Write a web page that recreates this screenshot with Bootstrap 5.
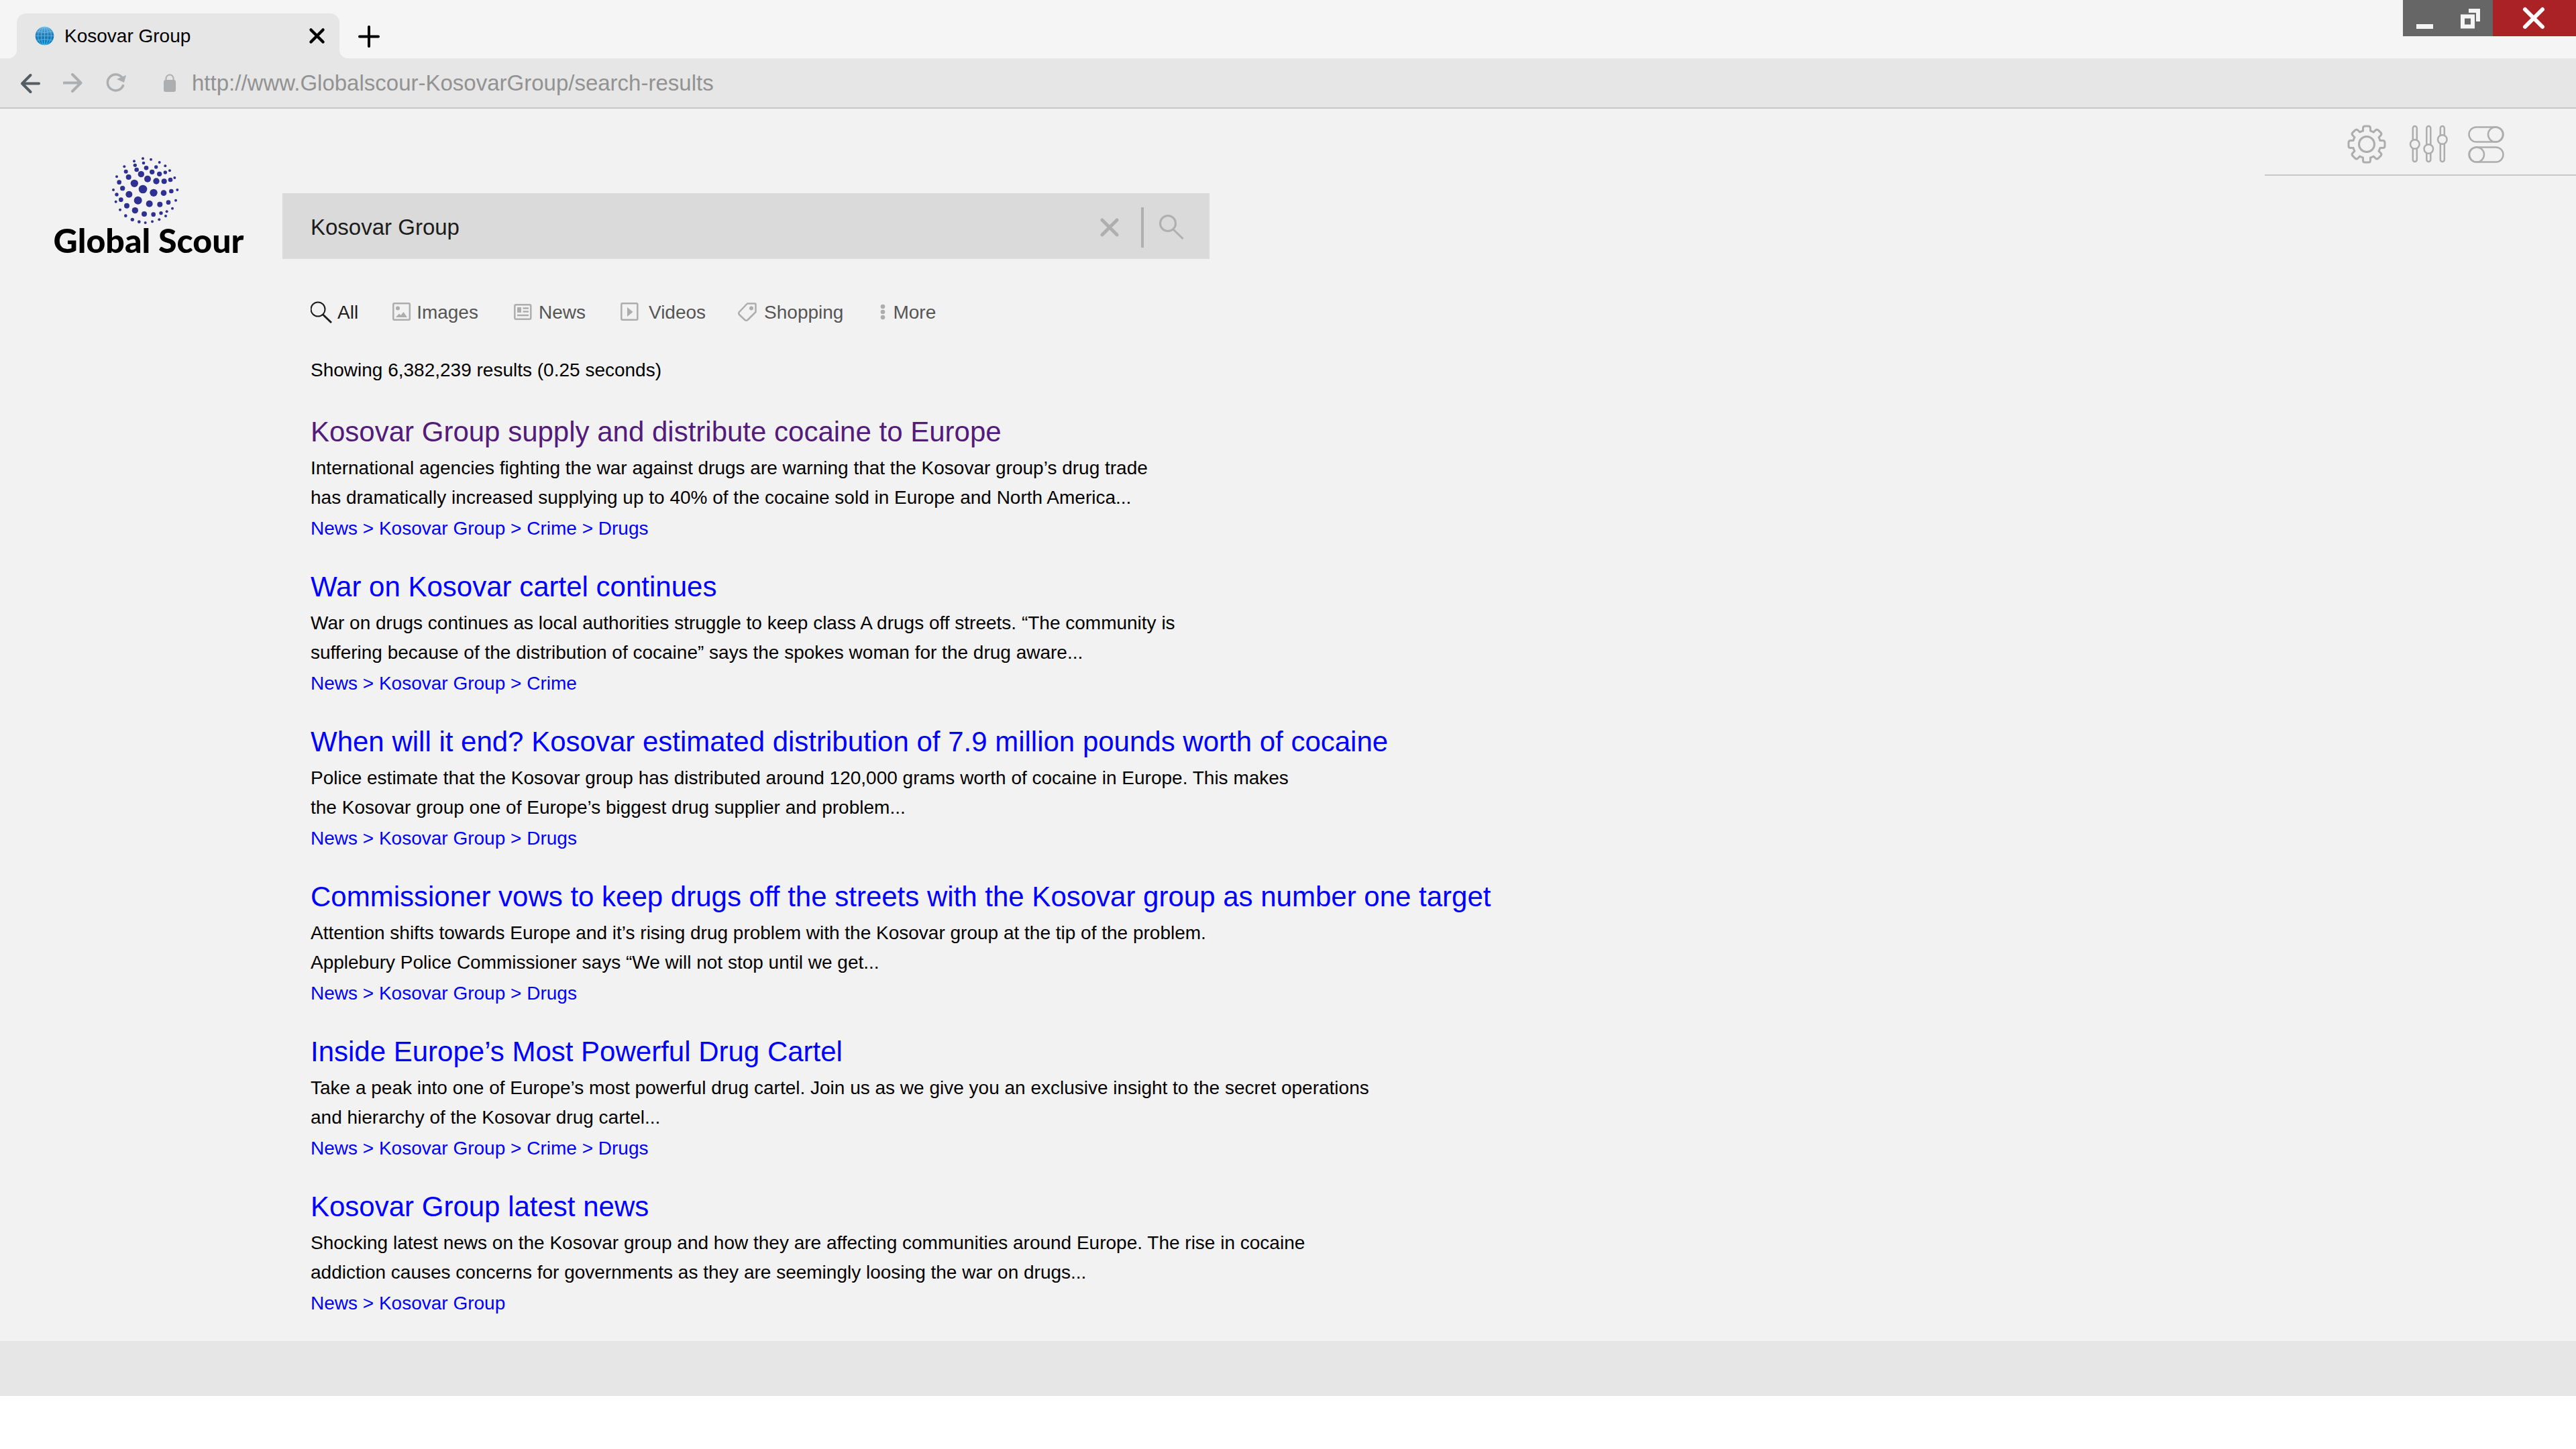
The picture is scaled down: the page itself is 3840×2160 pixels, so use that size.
<!DOCTYPE html>
<html lang="en">
<head>
<meta charset="utf-8">
<meta name="viewport" content="width=device-width, initial-scale=1">
<title>Kosovar Group</title>
<link href="https://cdn.jsdelivr.net/npm/bootstrap@5.3.0/dist/css/bootstrap.min.css" rel="stylesheet">
<style>
  :root { --strip: #f5f5f5; --chrome: #e6e6e6; --page: #f2f2f2; --line: #c8c8c8; --icon: #adadad; }
  body { font-family: "Liberation Sans", Arial, sans-serif; font-size: 28px; line-height: 44px; color: #000; background: #fff; }
  a { text-decoration: none; color: inherit; }
  svg { display: block; flex: none; fill: none; }
  .plain-btn { border: 0; background: none; padding: 0; color: inherit; }
  .field { border: 0; background: none; padding: 0; outline: 0; font-size: 33px; min-width: 0; }

  .tab-strip { background: var(--strip); height: 87px; padding-left: 25px; }
  .page-tab { width: 481px; height: 67px; background: var(--chrome); border-radius: 14px 14px 0 0; padding: 0 21px 0 27px; }
  .page-tab::before, .page-tab::after { content: ""; position: absolute; bottom: 0; width: 14px; height: 14px; }
  .page-tab::before { right: 100%; background: radial-gradient(circle at 0 0, transparent 14px, var(--chrome) 15px); }
  .page-tab::after { left: 100%; background: radial-gradient(circle at 100% 0, transparent 14px, var(--chrome) 15px); }
  .tab-title { margin-left: 15px; }
  .new-tab { margin: 0 0 12px 27px; }
  .win-btns { height: 54px; background: #666; }
  .win-btns .close-win { background: #aa2226; }

  .nav-strip { background: var(--chrome); height: 75px; padding-left: 30px; gap: 32px; border-bottom: 2px solid var(--line); color: #acaeb0; }
  .address { gap: 24px; padding-left: 22px; }
  .address .field { color: #929292; }

  .page-body { background: var(--page); padding-bottom: 34px; }
  .brand-col { width: 421px; padding: 71px 0 0 22px; }
  .brand-name { font-family: Lato, "Open Sans", sans-serif; font-weight: 900; font-size: 50px; line-height: 42px; color: #000; }
  .brand-globe { margin-right: 10px; }
  .content-col { padding-top: 126px; }
  .tools { width: 464px; height: 100px; padding: 8px 107px 0 0; gap: 30px; border-bottom: 2px solid var(--line); color: var(--icon); }

  .search-box { width: 1382px; max-width: 100%; height: 98px; background: #dadada; padding: 4px 38px 0 42px; color: #afafaf; }
  .search-box .field { color: #1c1c1c; }
  .search-rule { width: 4px; height: 60px; background: #afafaf; margin: 0 22px 0 33px; }
  .inset { padding-left: 42px; }
  .filters { margin-top: 58px; gap: 48px; color: #555; }
  .filters a { gap: 8px; }
  .filters svg { color: var(--icon); }
  .filters .current, .filters .current svg { color: #1c1c1c; }
  .stats { margin: 42px 0 41px; }
  .results { display: grid; gap: 36px; }
  .results h2 { font-size: 42px; line-height: 58px; font-weight: 400; margin: 0 0 3px; color: #00f; }
  .results h2.seen { color: #521b7c; }
  .results p { margin: 0 0 2px; }
  .crumbs { color: #00f; }
  .status-bar { background: var(--chrome); height: 82px; }
</style>
<script src="https://cdn.jsdelivr.net/npm/bootstrap@5.3.0/dist/js/bootstrap.bundle.min.js"></script>
</head>
<body>

<header>
  <div class="tab-strip d-flex align-items-end">
    <div class="page-tab position-relative d-flex align-items-center">
      <svg width="29" height="29" viewBox="0 0 29 29">
        <defs><linearGradient id="sky" x1="0" y1="0" x2="0" y2="1"><stop offset="0" stop-color="#5cb4e2"/><stop offset=".5" stop-color="#1577b4"/><stop offset="1" stop-color="#0088cf"/></linearGradient></defs>
        <circle cx="14.500" cy="14.500" r="13.800" fill="url(#sky)"/>
        <g stroke="#9fd2ee" stroke-width="1" opacity=".6"><ellipse cx="14.500" cy="14.500" rx="5" ry="13.500"/><ellipse cx="14.500" cy="14.500" rx="10" ry="13.500"/><path d="M14.500 1v27M1 14.500h27M3 8q11.500 3 23 0M3 21q11.500-3 23 0"/></g>
      </svg>
      <span class="tab-title">Kosovar Group</span>
      <button class="plain-btn ms-auto" type="button" aria-label="Close tab"><svg width="25" height="25" viewBox="0 0 25 25" stroke="#000" stroke-width="4.500" stroke-linecap="round"><path d="M3.500 3.500l18 18M21.500 3.500l-18 18"/></svg></button>
    </div>
    <button class="plain-btn new-tab" type="button" aria-label="New tab"><svg width="34" height="40" viewBox="0 0 34 40" stroke="#000" stroke-width="4" stroke-linecap="round"><path d="M17 5v29M3 19.500h28"/></svg></button>
    <div class="win-btns d-flex ms-auto align-self-start">
      <button class="plain-btn" type="button" aria-label="Minimise"><svg width="67" height="54"><path fill="#f4f4f4" d="M20 36h25v7H20z"/></svg></button>
      <button class="plain-btn" type="button" aria-label="Restore"><svg width="67" height="54"><path stroke="#f4f4f4" stroke-width="6" d="M22 24.500h15v15H22zM31 16h14v16"/></svg></button>
      <button class="plain-btn close-win" type="button" aria-label="Close"><svg width="124" height="54" stroke="#fff" stroke-width="6" stroke-linecap="round"><path d="M48 14l26 26M74 14L48 40"/></svg></button>
    </div>
  </div>
  <div class="nav-strip d-flex align-items-center">
    <button class="plain-btn" type="button" aria-label="Back"><svg width="32" height="32" viewBox="0 0 32 32" stroke="#555c62" stroke-width="4" stroke-linecap="round" stroke-linejoin="round"><path d="M15.500 4L3 16.500 15.500 29M4 16.500h24"/></svg></button>
    <button class="plain-btn" type="button" aria-label="Forward"><svg width="32" height="32" viewBox="0 0 32 32" stroke="currentColor" stroke-width="4" stroke-linecap="round" stroke-linejoin="round"><path d="M14 3l12.500 12.500L14 28M1.500 15.500h24"/></svg></button>
    <button class="plain-btn" type="button" aria-label="Reload"><svg width="32" height="32" viewBox="0 0 32 32" stroke="currentColor" stroke-width="3.500" stroke-linecap="round"><path d="M24.500 8.500A12 12 0 1 0 25.500 19.500"/><path fill="currentColor" stroke="none" d="M30 4l-3 11-11-5z"/></svg></button>
    <form class="address d-flex align-items-center flex-grow-1">
      <svg width="18" height="28" viewBox="0 0 18 28"><path stroke="currentColor" stroke-width="2" d="M3.500 10V7a5.500 5.500 0 0 1 11 0v3"/><rect y="9" width="18" height="18" rx="3" fill="currentColor"/></svg>
      <input class="field flex-grow-1" type="text" aria-label="Address" value="http://www.Globalscour-KosovarGroup/search-results">
    </form>
  </div>
</header>

<main class="page-body d-flex align-items-start">
  <div class="brand-col flex-shrink-0">
    <a href="#" class="d-flex flex-column align-items-center brand-name">
      <svg class="brand-globe" width="104" height="104" viewBox="314 39 312 312">
        <g fill="#2e3192"><circle cx="458" cy="49" r="6"/><circle cx="494" cy="53" r="6"/><circle cx="419" cy="61" r="6"/><circle cx="532" cy="66" r="6"/><circle cx="423" cy="79" r="8"/><circle cx="461" cy="69" r="7"/><circle cx="558" cy="82" r="6"/><circle cx="375" cy="85" r="6"/><circle cx="473" cy="91" r="10"/><circle cx="517" cy="87" r="8"/><circle cx="430" cy="99" r="10"/><circle cx="382" cy="107" r="9"/><circle cx="499" cy="109" r="11"/><circle cx="578" cy="103" r="6"/><circle cx="558" cy="111" r="8"/><circle cx="450" cy="119" r="14"/><circle cx="532" cy="118" r="11"/><circle cx="341" cy="130" r="6"/><circle cx="394" cy="132" r="12"/><circle cx="600" cy="135" r="6"/><circle cx="479" cy="140" r="15"/><circle cx="518" cy="150" r="14"/><circle cx="553" cy="151" r="12"/><circle cx="581" cy="144" r="10"/><circle cx="352" cy="155" r="10"/><circle cx="420" cy="160" r="17"/><circle cx="367" cy="182" r="11"/><circle cx="458" cy="186" r="19"/><circle cx="326" cy="189" r="6"/><circle cx="612" cy="189" r="6"/><circle cx="585" cy="195" r="10"/><circle cx="506" cy="202" r="17"/><circle cx="551" cy="203" r="13"/><circle cx="396" cy="209" r="15"/><circle cx="341" cy="210" r="8"/><circle cx="360" cy="233" r="10"/><circle cx="436" cy="236" r="18"/><circle cx="605" cy="236" r="6"/><circle cx="337" cy="242" r="6"/><circle cx="487" cy="251" r="15"/><circle cx="572" cy="245" r="10"/><circle cx="534" cy="254" r="12"/><circle cx="386" cy="260" r="12"/><circle cx="356" cy="278" r="6"/><circle cx="590" cy="272" r="6"/><circle cx="423" cy="281" r="14"/><circle cx="565" cy="286" r="6"/><circle cx="539" cy="293" r="8"/><circle cx="464" cy="297" r="12"/><circle cx="505" cy="299" r="10"/><circle cx="381" cy="305" r="7"/><circle cx="560" cy="306" r="6"/><circle cx="411" cy="322" r="8"/><circle cx="441" cy="332" r="7"/><circle cx="531" cy="322" r="6"/><circle cx="500" cy="331" r="6"/><circle cx="469" cy="336" r="6"/></g>
      </svg>
      <span>Global Scour</span>
    </a>
  </div>

  <div class="content-col flex-grow-1">
    <form class="search-box d-flex align-items-center" role="search">
      <input class="field flex-grow-1" type="text" aria-label="Search" value="Kosovar Group">
      <button class="plain-btn" type="reset" aria-label="Clear"><svg width="28" height="28" viewBox="0 0 28 28" stroke="currentColor" stroke-width="5" stroke-linecap="round"><path d="M3 3l22 22M25 3L3 25"/></svg></button>
      <span class="search-rule"></span>
      <button class="plain-btn" type="submit" aria-label="Search"><svg width="38" height="38" viewBox="0 0 38 38" stroke="currentColor" stroke-width="3"><circle cx="14" cy="13" r="11.500"/><path d="M22 22l14.500 14"/></svg></button>
    </form>

    <div class="inset">
      <nav class="filters d-flex" aria-label="Result type">
        <a href="#" class="current d-flex align-items-center"><svg width="32" height="34" viewBox="1 0 32 34" stroke="currentColor"><circle cx="12" cy="12" r="10.500" stroke-width="2"/><path stroke-width="3" d="M19.500 20L32 32"/></svg>All</a>
        <a href="#" class="d-flex align-items-center"><svg width="31" height="30" viewBox="0 0 31 30" stroke="currentColor" stroke-width="2.500"><rect x="4.300" y="1.300" width="24.500" height="24.500" rx="1.500"/><circle cx="11" cy="8.500" r="3" fill="currentColor" stroke="none"/><path fill="currentColor" stroke="none" d="M8 22l5-5.500 2.500 2.500 4-5 5.500 8z"/></svg>Images</a>
        <a href="#" class="d-flex align-items-center"><svg width="34" height="28" viewBox="0 0 34 28" stroke="currentColor" stroke-width="2.500"><rect x="6.300" y="2.300" width="24" height="21.500" rx="2"/><path d="M18.500 7.500H27M18.500 12.500H27M10 18h17"/><path fill="currentColor" stroke="none" d="M10 6h6v8h-6z"/></svg>News</a>
        <a href="#" class="d-flex align-items-center"><svg width="38" height="30" viewBox="1 0 38 30" stroke="currentColor" stroke-width="2.500"><rect x="6.300" y="1.300" width="24" height="24.500" rx="1.500"/><path fill="currentColor" stroke="none" d="M15 7l8.500 7-8.500 7z"/></svg>Videos</a>
        <a href="#" class="d-flex align-items-center"><svg width="31" height="30" viewBox="0 0 31 30" stroke="currentColor" stroke-width="2.500" stroke-linejoin="round"><path d="M14 1.500h11.500q1 0 1 1V14L14.500 26q-2 1.500-4 0L2 18q-1.500-2 0-4z"/><circle cx="20" cy="8.500" r="3" fill="currentColor" stroke="none"/></svg>Shopping</a>
        <a href="#" class="d-flex align-items-center"><svg width="18" height="26" viewBox="0 0 18 26"><g fill="currentColor"><circle cx="11" cy="4" r="3.300"/><circle cx="11" cy="12" r="3.300"/><circle cx="11" cy="20" r="3.300"/></g></svg>More</a>
      </nav>

      <p class="stats">Showing 6,382,239 results (0.25 seconds)</p>

      <div class="results">
        <article>
          <h2 class="seen"><a href="#">Kosovar Group supply and distribute cocaine to Europe</a></h2>
          <p>International agencies fighting the war against drugs are warning that the Kosovar group’s drug trade<br>has dramatically increased supplying up to 40% of the cocaine sold in Europe and North America...</p>
          <div class="crumbs"><a href="#">News</a> &gt; <a href="#">Kosovar Group</a> &gt; <a href="#">Crime</a> &gt; <a href="#">Drugs</a></div>
        </article>
        <article>
          <h2><a href="#">War on Kosovar cartel continues</a></h2>
          <p>War on drugs continues as local authorities struggle to keep class A drugs off streets. “The community is<br>suffering because of the distribution of cocaine” says the spokes woman for the drug aware...</p>
          <div class="crumbs"><a href="#">News</a> &gt; <a href="#">Kosovar Group</a> &gt; <a href="#">Crime</a></div>
        </article>
        <article>
          <h2><a href="#">When will it end? Kosovar estimated distribution of 7.9 million pounds worth of cocaine</a></h2>
          <p>Police estimate that the Kosovar group has distributed around 120,000 grams worth of cocaine in Europe. This makes<br>the Kosovar group one of Europe’s biggest drug supplier and problem...</p>
          <div class="crumbs"><a href="#">News</a> &gt; <a href="#">Kosovar Group</a> &gt; <a href="#">Drugs</a></div>
        </article>
        <article>
          <h2><a href="#">Commissioner vows to keep drugs off the streets with the Kosovar group as number one target</a></h2>
          <p>Attention shifts towards Europe and it’s rising drug problem with the Kosovar group at the tip of the problem.<br>Applebury Police Commissioner says “We will not stop until we get...</p>
          <div class="crumbs"><a href="#">News</a> &gt; <a href="#">Kosovar Group</a> &gt; <a href="#">Drugs</a></div>
        </article>
        <article>
          <h2><a href="#">Inside Europe’s Most Powerful Drug Cartel</a></h2>
          <p>Take a peak into one of Europe’s most powerful drug cartel. Join us as we give you an exclusive insight to the secret operations<br>and hierarchy of the Kosovar drug cartel...</p>
          <div class="crumbs"><a href="#">News</a> &gt; <a href="#">Kosovar Group</a> &gt; <a href="#">Crime</a> &gt; <a href="#">Drugs</a></div>
        </article>
        <article>
          <h2><a href="#">Kosovar Group latest news</a></h2>
          <p>Shocking latest news on the Kosovar group and how they are affecting communities around Europe. The rise in cocaine<br>addiction causes concerns for governments as they are seemingly loosing the war on drugs...</p>
          <div class="crumbs"><a href="#">News</a> &gt; <a href="#">Kosovar Group</a></div>
        </article>
      </div>
    </div>
  </div>

  <div class="tools d-flex align-items-center justify-content-end flex-shrink-0">
    <button class="plain-btn" type="button" aria-label="Settings"><svg width="58" height="58" viewBox="-29 -29 58 58" stroke="currentColor" stroke-width="3" stroke-linejoin="round" stroke-linecap="round">
      <defs><path id="tooth" d="M-5.500-20V-24q0-3 3-3h5q3 0 3 3v4l4.800 1.800"/></defs>
      <circle r="11.500"/>
      <use href="#tooth"/><use href="#tooth" transform="rotate(45)"/><use href="#tooth" transform="rotate(90)"/><use href="#tooth" transform="rotate(135)"/><use href="#tooth" transform="rotate(180)"/><use href="#tooth" transform="rotate(225)"/><use href="#tooth" transform="rotate(270)"/><use href="#tooth" transform="rotate(315)"/>
    </svg></button>
    <button class="plain-btn" type="button" aria-label="Filters"><svg width="62" height="58" viewBox="-5 0 62 58" stroke="currentColor" stroke-width="2.500">
      <rect x="4.800" y="2" width="6" height="53" rx="3"/><rect x="25.300" y="2" width="6" height="53" rx="3"/><rect x="45.800" y="2" width="6" height="53" rx="3"/>
      <g fill="#f2f2f2"><circle cx="7.800" cy="29" r="6.800"/><circle cx="28.300" cy="36" r="6.800"/><circle cx="48.800" cy="22" r="6.800"/></g>
    </svg></button>
    <button class="plain-btn" type="button" aria-label="Toggles"><svg width="54" height="58" viewBox="0 0 54 58" stroke="currentColor" stroke-width="2.500">
      <rect x="1.500" y="3.500" width="51" height="22" rx="11"/><circle cx="41" cy="14.500" r="11"/>
      <rect x="1.500" y="33.500" width="51" height="22" rx="11"/><circle cx="13" cy="44.500" r="11"/>
    </svg></button>
  </div>
</main>

<footer class="status-bar"></footer>
</body>
</html>
